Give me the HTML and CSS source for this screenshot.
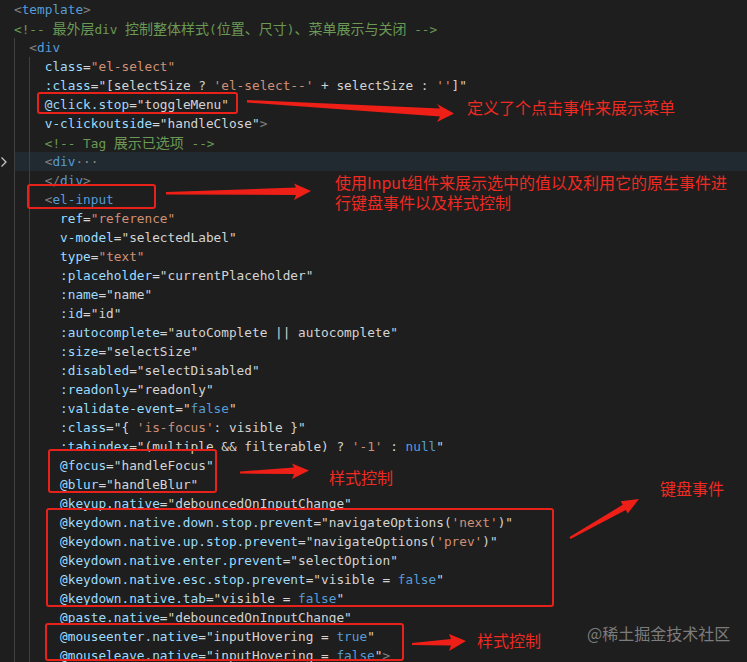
FILE: index.html
```html
<!DOCTYPE html>
<html lang="zh-CN">

<head>
    <meta charset="UTF-8">
    <title>el-select template</title>
    <link rel="stylesheet" href="styles.css">
</head>

<body>
    <div class="shot">
        <div class="code">
            <div class="line"><span class="p">&lt;</span><span class="t">template</span><span class="p">&gt;</span></div>
            <div class="line c">&lt;!-- <span class="cj">最外层</span>div <span class="cj">控制整体样式</span>(<span class="cj">位置、尺寸</span>)<span class="cj">、菜单展示与关闭</span> --&gt;</div>
            <div class="line i2 g1"><span class="p">&lt;</span><span class="t">div</span></div>
            <div class="line i4 g2"><span class="a">class</span>=<span class="s">"el-select"</span></div>
            <div class="line i4 g2"><span class="a">:class</span>="[<span class="v">selectSize</span> ? <span class="s">'el-select--'</span> + <span class="v">selectSize</span> : <span class="s">''</span>]"</div>
            <div class="line i4 g2"><span class="a">@click.stop</span>="<span class="v">toggleMenu</span>"</div>
            <div class="line i4 g2"><span class="a">v-clickoutside</span>="<span class="v">handleClose</span>"<span class="p">&gt;</span></div>
            <div class="line i4 g2 c">&lt;!-- Tag <span class="cj">展示已选项</span> --&gt;</div>
            <div class="line i4 g2 folded"><svg class="fold" width="8" height="12" viewBox="0 0 8 12"><path d="M1.5 1.5 L6 6 L1.5 10.5" fill="none" stroke="#c5c5c5" stroke-width="1.3"/></svg><span class="p">&lt;</span><span class="t">div</span><span class="dots">···</span></div>
            <div class="line i4 g2"><span class="p">&lt;/</span><span class="t">div</span><span class="p">&gt;</span></div>
            <div class="line i4 g2"><span class="p">&lt;</span><span class="t">el-input</span></div>
            <div class="line i6 g2"><span class="a">ref</span>=<span class="s">"reference"</span></div>
            <div class="line i6 g2"><span class="a">v-model</span>="<span class="v">selectedLabel</span>"</div>
            <div class="line i6 g2"><span class="a">type</span>=<span class="s">"text"</span></div>
            <div class="line i6 g2"><span class="a">:placeholder</span>="<span class="v">currentPlaceholder</span>"</div>
            <div class="line i6 g2"><span class="a">:name</span>="<span class="v">name</span>"</div>
            <div class="line i6 g2"><span class="a">:id</span>="<span class="v">id</span>"</div>
            <div class="line i6 g2"><span class="a">:autocomplete</span>="<span class="v">autoComplete</span> || <span class="v">autocomplete</span>"</div>
            <div class="line i6 g2"><span class="a">:size</span>="<span class="v">selectSize</span>"</div>
            <div class="line i6 g2"><span class="a">:disabled</span>="<span class="v">selectDisabled</span>"</div>
            <div class="line i6 g2"><span class="a">:readonly</span>="<span class="v">readonly</span>"</div>
            <div class="line i6 g2"><span class="a">:validate-event</span>="<span class="k">false</span>"</div>
            <div class="line i6 g2"><span class="a">:class</span>="{ <span class="s">'is-focus'</span>: <span class="v">visible</span> }"</div>
            <div class="line i6 g2"><span class="a">:tabindex</span>="(<span class="v">multiple</span> &amp;&amp; <span class="v">filterable</span>) ? <span class="s">'-1'</span> : <span class="k">null</span>"</div>
            <div class="line i6 g2"><span class="a">@focus</span>="<span class="v">handleFocus</span>"</div>
            <div class="line i6 g2"><span class="a">@blur</span>="<span class="v">handleBlur</span>"</div>
            <div class="line i6 g2"><span class="a">@keyup.native</span>="<span class="v">debouncedOnInputChange</span>"</div>
            <div class="line i6 g2"><span class="a">@keydown.native.down.stop.prevent</span>="<span class="v">navigateOptions</span>(<span class="s">'next'</span>)"</div>
            <div class="line i6 g2"><span class="a">@keydown.native.up.stop.prevent</span>="<span class="v">navigateOptions</span>(<span class="s">'prev'</span>)"</div>
            <div class="line i6 g2"><span class="a">@keydown.native.enter.prevent</span>="<span class="v">selectOption</span>"</div>
            <div class="line i6 g2"><span class="a">@keydown.native.esc.stop.prevent</span>="<span class="v">visible</span> = <span class="k">false</span>"</div>
            <div class="line i6 g2"><span class="a">@keydown.native.tab</span>="<span class="v">visible</span> = <span class="k">false</span>"</div>
            <div class="line i6 g2"><span class="a">@paste.native</span>="<span class="v">debouncedOnInputChange</span>"</div>
            <div class="line i6 g2"><span class="a">@mouseenter.native</span>="<span class="v">inputHovering</span> = <span class="k">true</span>"</div>
            <div class="line i6 g2"><span class="a">@mouseleave.native</span>="<span class="v">inputHovering</span> = <span class="k">false</span>"<span class="p">&gt;</span></div>
        </div>

        <!-- annotations drawn over the code -->
        <div class="box box-click"></div>
        <div class="box box-input"></div>
        <div class="box box-focus"></div>
        <div class="box box-keys"></div>
        <div class="box box-hover"></div>

        <svg class="arrows" width="747" height="662" viewBox="0 0 747 662">
            <polygon points="247,100 440,108.5 437,104 454,113.5 437,122 440,116.5 247,102.5" />
            <polygon points="166,192 296,187.5 294,183.5 311,191 294,200 296,195 166,194.5" />
            <polygon points="240,471.5 294,467.5 292,463.5 309,470.5 292,479 294,474 240,473.5" />
            <polygon points="569.5,537.1 622.7,504.8 620.7,501.3 639,499 627.7,513.5 625.7,510 570.5,538.9" />
            <polygon points="412,643 451,639 449,634 466,641 449,651 451,645.5 412,645" />
        </svg>

        <p class="note note-click">定义了个点击事件来展示菜单</p>
        <p class="note note-input">使用Input组件来展示选中的值以及利用它的原生事件进<br>行键盘事件以及样式控制</p>
        <p class="note note-focus">样式控制</p>
        <p class="note note-keys">键盘事件</p>
        <p class="note note-hover">样式控制</p>
        <p class="mark">@稀土掘金技术社区</p>
    </div>
</body>

</html>
```

FILE: styles.css
```css
body {
    margin: 0;
    background-color: #1e1e1e;
    overflow: hidden;
}

.shot {
    position: relative;
    width: 747px;
    height: 662px;
    overflow: hidden;
    background-color: #1e1e1e;
}

.code {
    padding-left: 14px;
    font-family: "DejaVu Sans Mono", "Noto Sans CJK SC", monospace;
    font-size: 12.75px;
    color: #d4d4d4;
}

.line {
    position: relative;
    height: 19px;
    line-height: 19px;
    white-space: pre;
}

.i2 { padding-left: 2ch; }
.i4 { padding-left: 4ch; }
.i6 { padding-left: 6ch; }

/* indent guides */
.g1 {
    background: linear-gradient(#404040, #404040) no-repeat 0 0 / 1px 100%;
}
.g2 {
    background:
        linear-gradient(#404040, #404040) no-repeat 0 0 / 1px 100%,
        linear-gradient(#404040, #404040) no-repeat 2ch 0 / 1px 100%;
}
.folded {
    background-color: #212a31;
}

.fold {
    position: absolute;
    left: -14px;
    top: 4px;
}

.p { color: #808080; }
.t { color: #569cd6; }
.a { color: #9cdcfe; }
.s { color: #ce9178; }
.v { color: #d4d4d4; }
.k { color: #569cd6; }
.c, .c .cj { color: #6a9955; }
.dots { color: #8a8a8a; }

.cj {
    font-family: "Noto Sans CJK SC", sans-serif;
    font-size: 14px;
}

/* red annotation boxes */
.box {
    position: absolute;
    border: 2px solid #e8221a;
    border-radius: 3px;
    box-sizing: border-box;
}
.box-click { left: 37px; top: 92px; width: 201px; height: 22px; }
.box-input { left: 27px; top: 184px; width: 129px; height: 25px; }
.box-focus { left: 48px; top: 449px; width: 169px; height: 44px; }
.box-keys { left: 46px; top: 508px; width: 508px; height: 99px; }
.box-hover { left: 45px; top: 623px; width: 359px; height: 38px; }

.arrows {
    position: absolute;
    left: 0;
    top: 0;
}
.arrows polygon {
    fill: #ee1f17;
}

.note {
    position: absolute;
    margin: 0;
    font-family: "Noto Sans CJK SC", sans-serif;
    font-size: 16px;
    line-height: 20px;
    color: #ee2a22;
    white-space: nowrap;
}
.note-click { left: 467px; top: 97px; }
.note-input { left: 335px; top: 172px; }
.note-focus { left: 329px; top: 467px; }
.note-keys { left: 660px; top: 478px; }
.note-hover { left: 477px; top: 630px; }

.mark {
    position: absolute;
    left: 587px;
    top: 623px;
    margin: 0;
    font-family: "Noto Sans CJK SC", sans-serif;
    font-size: 16px;
    line-height: 20px;
    color: #7c7c7c;
}
```
